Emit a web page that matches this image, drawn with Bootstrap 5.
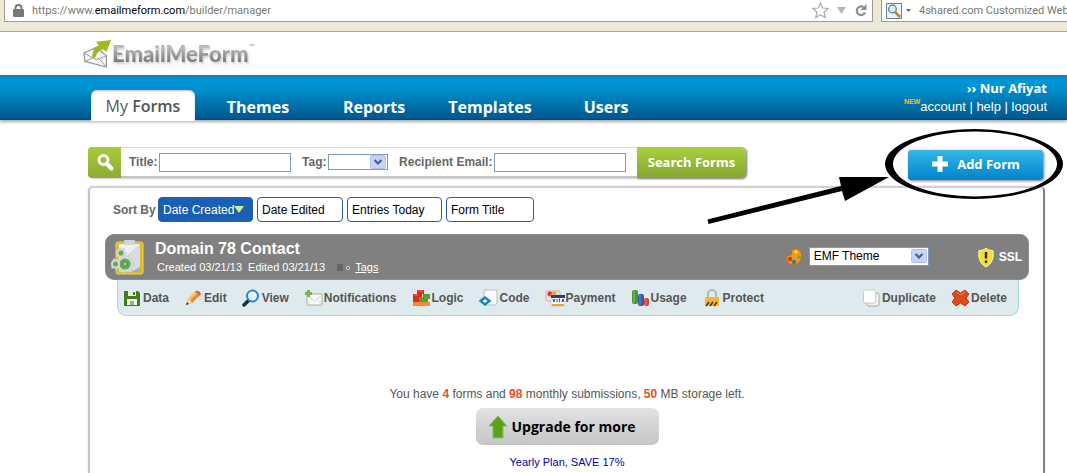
<!DOCTYPE html>
<html lang="en">
<head>
<meta charset="utf-8">
<meta name="viewport" content="width=device-width, initial-scale=1">
<title>EmailMeForm - Form Manager</title>
<link href="https://cdn.jsdelivr.net/npm/bootstrap@5.3.0/dist/css/bootstrap.min.css" rel="stylesheet">
<style>
body{font-family:"Liberation Sans",Arial,sans-serif;font-size:12px;line-height:16px;color:#555;background:#fff;overflow-x:hidden}
svg{display:block;flex:none}
.browser-bar{background:#ece9d8;height:32px;border-bottom:1px solid #aca899;font:11px/16px Roboto,"Noto Sans",sans-serif;color:#777;padding-left:4px}
.url-box,.find-box{background:#fff;border:1px solid #a09d8f;border-top:0;height:22px}
.url-box b{font-weight:400;color:#000}
.find-box input{border:0;outline:0;padding:0;color:#777;background:none}
.find-box{width:190px;margin-right:-4px;overflow:hidden}
.logo-row{height:43px;padding-left:83px}
.logo-word{font:900 22px/24px Lato,"Open Sans",sans-serif;color:transparent;background:linear-gradient(#b8b8b8 25%,#7c7c7c 80%);-webkit-background-clip:text;background-clip:text;filter:drop-shadow(1px 2px 1px #ccc)}
.logo-tm{font-size:6px;line-height:8px;color:#999;margin-top:10px}
.main-nav{height:45px;background:linear-gradient(#0c84bd,#0096d6 12%,#0092d0 30%,#00568c);border-bottom:1px solid #0a4a76;box-shadow:0 2px 3px #aaa;padding:0 20px 0 91px;font-family:"Open Sans","Noto Sans",sans-serif}
.main-nav .tab{width:116px;font-size:16px;line-height:24px;font-weight:700;color:#fff;text-align:center;text-decoration:none}
.main-nav .tab.active{width:104px;margin-right:5px;background:#fff;color:#555;border-radius:6px 6px 0 0;position:relative;font-weight:400;padding:4px 0 3px;margin-bottom:-2px;box-shadow:inset 0 1px 2px #bbb}
.main-nav .tab.active span{font-weight:600}
.user-box{font:13px/18px "Liberation Sans",sans-serif;color:#fff}
.user-box a{color:#fff;text-decoration:none}
.user-box .who{font:bold 13px/18px "Open Sans",sans-serif}
.user-box .links{padding-top:1px}
.user-box .fresh{color:#ffc40c;font:bold 7px/8px "Liberation Sans",sans-serif}
.page-body{padding:0 22px 0 88px}
.find-row{margin-top:27px;padding-right:2px}
.search-strip{height:31px;border:1px solid #ddd;border-bottom:2px solid #c4c4c4;border-radius:5px;box-shadow:1px 1px 2px #ccc;background:#fff;font-weight:700;color:#666;width:658px}
.search-strip label{margin-right:2px}
.search-strip .lens{width:33px;height:31px;background:linear-gradient(#a9cc3c,#8cab35);border-radius:4px 0 0 4px;margin-left:-1px}
.field{border:1px solid #7f9db9;background:#fff;height:19px;width:132px;padding:0 3px;font-size:12px;border-radius:0}
.drop{appearance:none;border:1px solid #7f9db9;border-radius:0;background:#fff url("data:image/svg+xml,%3Csvg xmlns='http://www.w3.org/2000/svg' width='16' height='14'%3E%3Crect x='.5' y='.5' width='15' height='13' rx='1' fill='%23c4d4fc' stroke='%23b0c4f0'/%3E%3Cpath d='M4.500 5l3.500 3.500L11.500 5' fill='none' stroke='%2344608c' stroke-width='2.200'/%3E%3C/svg%3E") no-repeat right 1px center;padding:0 20px 0 4px;color:#000}
.drop-tag{width:60px;height:16px}
.drop-theme{width:120px;height:19px;font-size:12px;line-height:16px;margin:0 48px 2px 2px}
.go{border:0;width:109px;height:31px;background:linear-gradient(#a9cf3c,#86a733);border-radius:0 5px 5px 0;box-shadow:1px 1px 2px #888;color:#fff;font:bold 13px/30px "Open Sans",sans-serif;margin-right:-1px;padding:0}
.add{width:135px;height:30px;border:0;border-radius:3px;background:linear-gradient(#37b6e8,#0084cc);color:#fff;font:bold 13px/20px "Open Sans",sans-serif;box-shadow:1px 1px 3px #777;padding:0 0 3px}
.add-wrap{padding-top:3px}
.callout{position:absolute;left:-208px;top:-27px;pointer-events:none}
.panel{margin-top:6px;border:2px solid #d0d0d0;border-bottom:0;border-right-color:#858585;border-left-color:#c4c4c4;border-radius:5px 5px 0 0;box-shadow:0 0 2px #ccc;padding:9px 14px 0 15px}
.sorts{gap:4px;padding-left:8px}
.sorts b{color:#666;width:41px;white-space:nowrap}
.sorts button{height:25px;border:1px solid #2460ac;border-radius:4px;background:#fff;color:#000;font-size:12px;padding:0 4px;text-align:left}
.sorts .s-date{background:#1a5fb4;color:#fff;width:95px}
.s-edit{width:86px}.s-entry{width:95px}.s-title{width:88px}
.form-head{margin-top:12px;background:#808080;border-radius:9px;height:46px;color:#fff;padding:0 6px 0 5px;border:1px solid #8d8d8d}
.form-head h2{font-size:16px;line-height:18px;font-weight:700;margin:0}
.form-head .meta{font-size:11px;line-height:15px;padding:2px 0 0 2px}
.form-head .meta a{color:#fff}
.tools{margin:0 10px 0 12px;height:36px;background:#dfeaee;border:1px solid #a9d5d5;border-top:0;border-radius:0 0 9px 9px;padding:0 11px 0 5px;gap:15px}
.tools a{color:#555;font-weight:700;text-decoration:none;display:flex;align-items:center;gap:1px}
.quota{margin-top:70px}
.quota strong{color:#e8501e}
.upgrade{margin-top:6px;width:183px;height:37px;border:0;border-radius:7px;background:linear-gradient(#e2e2e4,#c4c6c8);color:#000;font:bold 14px/36px "Open Sans",sans-serif;padding:0 0 0 12px}
.yearly{margin-top:9px;font-size:11px;color:#0000a8;text-decoration:none}
</style>
</head>
<body class="d-flex flex-column min-vh-100">
<div class="browser-bar d-flex">
  <div class="url-box d-flex flex-grow-1 align-items-center ps-2">
    <svg width="11" height="13" viewBox="0 0 11 13"><path d="M2.500 6V4a3 3 0 0 1 6 0v2" fill="none" stroke="#777" stroke-width="2"/><rect y="5" width="11" height="8" rx="1" fill="#777"/></svg>
    <span class="ms-2 flex-grow-1">https://www.<b>emailmeform.com</b>/builder/manager</span>
    <svg class="me-2" width="17" height="17" viewBox="0 0 17 17"><path d="M8.500 1l2.200 5 5.300.5-4 3.700 1.200 5.300-4.700-2.800-4.700 2.800L5 10.200 1 6.500 6.300 6z" fill="#fff" stroke="#aaa" stroke-width="1.200"/></svg>
    <svg class="me-2" width="9" height="7" viewBox="0 0 9 7"><path d="M0 0h9L4.500 7z" fill="#b4b8bc"/></svg>
    <svg class="me-1" width="14" height="13" viewBox="0 0 14 13"><path d="M9.500 3.200A4.300 4.300 0 1 0 11 8.500" fill="none" stroke="#8a9098" stroke-width="2.200"/><path d="M12.500 0v6H6.500z" fill="#8a9098"/></svg>
  </div>
  <div class="find-box d-flex align-items-center ms-2 ps-1">
    <svg width="16" height="16" viewBox="0 0 16 16"><rect x=".5" y=".5" width="15" height="15" fill="#edf3f8" stroke="#6c8094"/><path d="M9 9l5 5" stroke="#b08a38" stroke-width="2.600"/><circle cx="6.500" cy="6" r="3.800" fill="#d7f0f5" stroke="#507890" stroke-width="1.200"/></svg>
    <svg class="ms-1 me-2" width="5" height="3" viewBox="0 0 5 3"><path d="M0 0h5L2.500 3z" fill="#666"/></svg>
    <input type="text" class="flex-grow-1" aria-label="Web search" value="4shared.com Customized Web Search">
  </div>
</div>

<header class="logo-row d-flex align-items-center">
  <svg width="29" height="31" viewBox="0 0 31 31"><path d="M1 15L14 9l11 9v12L2 24z" fill="#f6f6f6" stroke="#999" stroke-width="1.300"/><path d="M1 15l13 7 11-4M2 24l9-4M25 30l-8-9" fill="none" stroke="#999"/><path d="M10 20c0-8 3-12 7-13l-3-4 16-2-5 13-3-3c-5 1-7 4-9 9z" fill="#9aba1e"/></svg>
  <div class="logo-word">EmailMeForm</div><span class="logo-tm align-self-start">™</span>
</header>

<nav class="main-nav d-flex justify-content-between align-items-end">
  <div class="d-flex align-items-end">
    <a class="tab active" href="#">My <span>Forms</span></a><a class="tab" href="#">Themes</a><a class="tab" href="#">Reports</a><a class="tab" href="#">Templates</a><a class="tab" href="#">Users</a>
  </div>
  <div class="user-box text-end align-self-start mt-1">
    <div class="who">›› Nur Afiyat</div>
    <div class="links d-flex"><span class="fresh">NEW</span><span><a href="#">account</a> | <a href="#">help</a> | <a href="#">logout</a></span></div>
  </div>
</nav>

<main class="page-body d-flex flex-column flex-grow-1">
  <div class="find-row d-flex justify-content-between align-items-start">
    <form class="search-strip d-flex align-items-center m-0" onsubmit="return false">
      <span class="lens d-flex align-items-center justify-content-center"><svg width="18" height="18" viewBox="0 0 18 18"><circle cx="7.500" cy="7" r="4.500" fill="none" stroke="#fff" stroke-width="3"/><path d="M11 11l4.500 4.500" stroke="#fff" stroke-width="4" stroke-linecap="round"/></svg></span>
      <label for="q-title" class="ms-2">Title:</label><input id="q-title" class="field" type="text">
      <label for="q-tag" class="ms-auto">Tag:</label><select id="q-tag" class="drop drop-tag"><option></option></select>
      <label for="q-mail" class="ms-auto">Recipient Email:</label><input id="q-mail" class="field me-auto" type="text">
      <button class="go" type="submit">Search Forms</button>
    </form>
    <div class="add-wrap position-relative">
      <button class="add d-flex align-items-center justify-content-center gap-2" type="button"><svg width="18" height="18" viewBox="0 0 18 18"><path d="M6.500 1h5v5.500H17v5h-5.500V17h-5v-5.500H1v-5h5.500z" fill="#fff"/></svg>Add Form</button>
      <svg class="callout" width="367" height="120" viewBox="0 0 367 120"><path fill-rule="evenodd" d="M185 44a89 35 0 0 1 178 0a89 35 0 0 1-178 0zM193 44a82 32.500 0 0 0 164 0a82 32.500 0 0 0-164 0z"/><path d="M7.500 99.500L141 66l-2-9 50-0-44 24-3-10L8.500 104z"/></svg>
    </div>
  </div>

  <section class="panel flex-grow-1">
    <div class="sorts d-flex align-items-center">
      <b>Sort By</b>
      <button type="button" class="s-date d-flex align-items-center">Date Created<svg width="10" height="7" viewBox="0 0 10 7"><path d="M0 0h10L5 7z" fill="#c8f08a"/></svg></button>
      <button type="button" class="s-edit">Date Edited</button>
      <button type="button" class="s-entry">Entries Today</button>
      <button type="button" class="s-title">Form Title</button>
    </div>

    <div class="form-head d-flex align-items-center">
      <svg width="36" height="38" viewBox="0 0 36 38"><rect x="5" y="4" width="27" height="32" rx="2" fill="#d9b926" stroke="#f0d850"/><path d="M8 6h21v25l-4 3H8z" fill="#d9dbe2"/><path d="M8 6h21L8 24z" fill="#eef0f2"/><path d="M29 29l-9 5h9z" fill="#aab"/><rect x="13" y="2" width="11" height="5" rx="1" fill="#d2d4d6"/><g fill="none" stroke="#c9cfc9" stroke-width="3" stroke-dasharray="2 2"><circle cx="14" cy="26" r="8"/><circle cx="4.500" cy="26" r="4"/><circle cx="10" cy="15" r="4"/></g><g fill="#5fae54" stroke="#d4d9d4" stroke-width="2"><circle cx="14" cy="26" r="6.500"/><circle cx="4.500" cy="26" r="3.500"/><circle cx="10" cy="15" r="3.500"/></g><circle cx="14" cy="26" r="2.500" fill="#a9b2a9" stroke="#3f8a38"/></svg>
      <div class="ms-2">
        <h2>Domain 78 Contact</h2>
        <div class="meta d-flex align-items-center"><span>Created 03/21/13&nbsp; Edited 03/21/13</span>
        <svg class="ms-2" width="18" height="9" viewBox="0 0 18 9"><path d="M4 1h6v7H4z" fill="#666"/><circle cx="15" cy="5" r="1.700" fill="none" stroke="#ccc"/></svg><a href="#" class="ms-1">Tags</a></div>
      </div>
      <svg class="ms-auto me-1" width="18" height="18" viewBox="0 0 18 18"><path d="M9 1c6-1 8 4 7.500 8S13 17 9 17s-8-3-7.500-7S5 8 6 7 5 2 9 1z" fill="#f39a1c" stroke="#c86812"/><circle cx="5" cy="11" r="2.200" fill="#df3318"/><circle cx="9" cy="14" r="2.200" fill="#247ed0"/><circle cx="14" cy="9" r="1.700" fill="#68b324"/><circle cx="11" cy="4" r="1.800" fill="#ffdd45"/></svg>
      <select class="drop drop-theme" aria-label="Theme"><option>EMF Theme</option></select>
      <svg class="me-1" width="18" height="21" viewBox="0 0 18 21"><path d="M9 1c2 2 4 2.500 7 2.500 1 8-1 13-7 16.500-6-3.500-8-8.500-7-16.500C5 3.500 7 3 9 1z" fill="#f2e02c" stroke="#fff6a8"/><path d="M9 5v6.500M9 13.500v2.500" stroke="#222" stroke-width="2.400"/></svg>
      <b>SSL</b>
    </div>

    <div class="tools d-flex align-items-center">
      <a href="#"><svg width="19" height="18" viewBox="0 0 19 18"><path d="M1 2h14l2 2v13H1z" fill="#3d7f1f"/><path d="M5 2h8v5H5z" fill="#e8efe4"/><path d="M10 3h2v3h-2z" fill="#3d7f1f"/><path d="M4 10h10v6H4z" fill="#f4f7f2"/><path d="M7 12h4v4H7z" fill="#8fbf62"/></svg>Data</a>
      <a href="#"><svg width="19" height="18" viewBox="0 0 19 18"><path d="M2 16l2-6 8-8q3-1 5 3l-9 9z" fill="#ef8a22"/><path d="M5 11L13 3" stroke="#ffc56c" stroke-width="2"/><path d="M12 2q3-1 5 3l-2 2q-1-3-4-4z" fill="#d8605a"/><path d="M2 16l2-6q3 1 4 4z" fill="#f4d9b0"/><path d="M2 16l1-3 2 2z" fill="#333"/></svg>Edit</a>
      <a href="#"><svg width="19" height="18" viewBox="0 0 19 18"><path d="M7 11l-5 5" stroke="#222b36" stroke-width="3.500" stroke-linecap="round"/><circle cx="10.500" cy="7" r="5.500" fill="#dff3ff" stroke="#2d86c8" stroke-width="2"/><path d="M7 6q2-3 5-2" stroke="#fff" stroke-width="2" fill="none"/></svg>View</a>
      <a href="#"><svg width="19" height="18" viewBox="0 0 19 18"><path d="M3 5h15v11H3z" fill="#f7f9f6" stroke="#a8aeaa"/><path d="M3 6l7.500 6L18 6M3 16l5-6m10 6l-5-6" fill="none" stroke="#d5dad7"/><path d="M3 1h3v2h2v3H6v2H3V6H1V3h2z" fill="#76b843"/></svg>Notifications</a>
      <a href="#"><svg width="19" height="18" viewBox="0 0 19 18"><path d="M1 5h4V1h7v4h-2v8H1z" fill="#dd2a1b"/><path d="M7 8h4V5h7v5h-2v4H7z" fill="#5c9b35"/><path d="M1 13h17v4H1z" fill="#f38a34"/><path d="M2 6h4M6 2h5" stroke="#ff7565"/></svg>Logic</a>
      <a href="#"><svg width="20" height="18" viewBox="0 0 20 18"><path d="M5 1h13v13l-2 2H5z" fill="#f8fafb" stroke="#b8c0c5"/><path d="M1.500 12L6 8.500l4.500 3.500L6 15.500z" fill="#e8f6fb" stroke="#1686b4" stroke-width="2.400"/></svg>Code</a>
      <a href="#"><svg width="20" height="18" viewBox="0 0 20 18"><rect x="1" y="2" width="14" height="10" rx="1" fill="#f6e2d0" stroke="#d8aaa0"/><circle cx="5" cy="5" r="2.500" fill="#d33"/><circle cx="9" cy="5" r="2.500" fill="#f3a321"/><rect x="6" y="6" width="14" height="11" fill="#fff" stroke="#ccc"/><path d="M6 6h14v3H6z" fill="#1c3f9c"/><path d="M7 15h12v2H7z" fill="#f2a22a"/><path d="M8 10l1 3 1-3m2 0v3m3-3h-1l1 2-1 1m3 0l1-3 1 3" fill="none" stroke="#1c3f9c"/></svg>Payment</a>
      <a href="#"><svg width="19" height="18" viewBox="0 0 19 18"><rect x="1" y="1" width="6" height="14" rx="2" fill="#469b35"/><rect x="7" y="5" width="6" height="12" rx="2" fill="#315ea6"/><rect x="13" y="9" width="5" height="8" rx="2" fill="#dc4030"/><path d="M3 2v12M9 6v10M15 10v6" stroke="#fff" stroke-opacity=".35"/></svg>Usage</a>
      <a href="#"><svg width="20" height="18" viewBox="0 0 20 18"><path d="M6 9V5a4 4 0 0 1 8 0v4" fill="none" stroke="#b5b8ba" stroke-width="2"/><rect x="3" y="8" width="14" height="9" rx="1" fill="#f5b92c"/><path d="M4 17l3-4m1 4l3-4m1 4l3-4" stroke="#4f3c14" stroke-width="1.600"/></svg>Protect</a>
      <a href="#" class="ms-auto"><svg width="19" height="18" viewBox="0 0 19 18"><rect x="5" y="4" width="12" height="13" rx="2" fill="#f0f0f0" stroke="#aaa"/><rect x="1.500" y="1" width="12" height="13" rx="2" fill="#fff" stroke="#ccc"/></svg>Duplicate</a>
      <a href="#"><svg width="19" height="18" viewBox="0 0 19 18"><path d="M5 1l4.500 3L14 1l4 4-3 4 3 4-4 4-4.500-3L5 17l-4-4 3-4-3-4z" fill="#dc4a1d" stroke="#b73a16"/><path d="M5 3l4.500 3L14 3" stroke="#f0875c" fill="none"/></svg>Delete</a>
    </div>

    <div class="d-flex flex-column align-items-center">
      <div class="quota">You have <strong>4</strong> forms and <strong>98</strong> monthly submissions, <strong>50</strong> MB storage left.</div>
      <button class="upgrade d-flex align-items-center gap-1" type="button"><svg width="20" height="24" viewBox="0 0 20 24"><path d="M10 1l9 10h-4v12H5V11H1z" fill="#58a21c" stroke="#86bd5c"/></svg>Upgrade for more</button>
      <a href="#" class="yearly">Yearly Plan, SAVE 17%</a>
    </div>
  </section>
</main>
<script src="https://cdn.jsdelivr.net/npm/bootstrap@5.3.0/dist/js/bootstrap.bundle.min.js"></script>
</body>
</html>
